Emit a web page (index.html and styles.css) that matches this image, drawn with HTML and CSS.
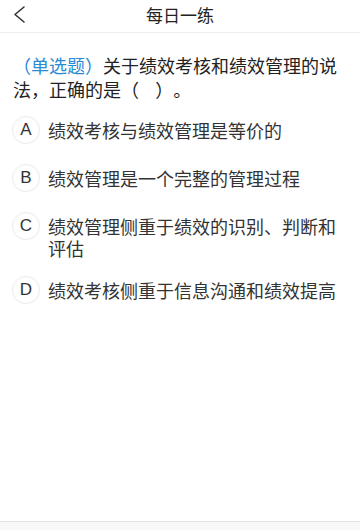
FILE: index.html
```html
<!DOCTYPE html>
<html lang="zh-CN">
<head>
    <meta charset="UTF-8">
    <meta name="viewport" content="width=device-width, initial-scale=1.0">
    <title>每日一练</title>
    <link rel="stylesheet" href="styles.css">
</head>
<body>
    <div class="page">
        <div class="header">
            <a href="#" class="back">
                <svg width="14" height="20" viewBox="0 0 14 20">
                    <polyline points="11,2 2,9.5 11,17" fill="none" stroke="#333" stroke-width="1.6" stroke-linecap="round" stroke-linejoin="round"/>
                </svg>
            </a>
            <div class="title">每日一练</div>
        </div>

        <div class="main">
            <p class="question"><span class="type">（单选题）</span>关于绩效考核和绩效管理的说法，正确的是（&nbsp;&nbsp;&nbsp;&nbsp;）。</p>

            <div class="options">
                <div class="option">
                    <span class="letter">A</span>
                    <span class="text">绩效考核与绩效管理是等价的</span>
                </div>
                <div class="option">
                    <span class="letter">B</span>
                    <span class="text">绩效管理是一个完整的管理过程</span>
                </div>
                <div class="option">
                    <span class="letter">C</span>
                    <span class="text">绩效管理侧重于绩效的识别、判断和评估</span>
                </div>
                <div class="option">
                    <span class="letter">D</span>
                    <span class="text">绩效考核侧重于信息沟通和绩效提高</span>
                </div>
            </div>
        </div>

        <div class="footer"></div>
    </div>
</body>
</html>
```

FILE: styles.css
```css
body {
    margin: 0;
    font-family: "Noto Sans CJK SC", "Noto Sans", sans-serif;
    background: #fff;
    color: #222;
    text-spacing-trim: space-all;
    font-feature-settings: "halt" 0, "chws" 0;
}
.page {
    display: flex;
    flex-direction: column;
    height: 530px;
}
.header {
    height: 32px;
    border-bottom: 1px solid #efefef;
    display: flex;
    align-items: center;
    justify-content: center;
    position: relative;
}
.back {
    position: absolute;
    left: 13px;
    top: 5px;
    display: block;
    line-height: 0;
}
.title {
    font-size: 17px;
    line-height: 29px;
    color: #222;
    margin-bottom: 4px;
}
.main {
    flex: 1;
}
.question {
    margin: 20px 0 0 0;
    padding: 0 8px 0 13px;
    font-size: 18px;
    line-height: 24px;
    color: #222;
}
.type {
    color: #2a8ad4;
}
.options {
    margin-top: 15px;
    padding: 0 8px 0 12px;
}
.option {
    display: flex;
    align-items: flex-start;
    margin-bottom: 20px;
}
.option:nth-child(3) {
    margin-bottom: 17px;
}
.letter {
    flex: none;
    width: 28px;
    height: 28px;
    box-sizing: border-box;
    border: 1px solid #ececec;
    border-radius: 50%;
    display: flex;
    align-items: center;
    justify-content: center;
    font-family: "Liberation Sans", Arial, sans-serif;
    font-size: 17px;
    color: #333;
    box-shadow: 0 0 2px rgba(0, 0, 0, 0.04);
}
.text {
    margin-left: 8px;
    margin-top: 3px;
    font-size: 18px;
    line-height: 22px;
    color: #333;
}
.footer {
    height: 8px;
    border-top: 1px solid #e2e2e2;
    background: #f8f8f8;
}
```
